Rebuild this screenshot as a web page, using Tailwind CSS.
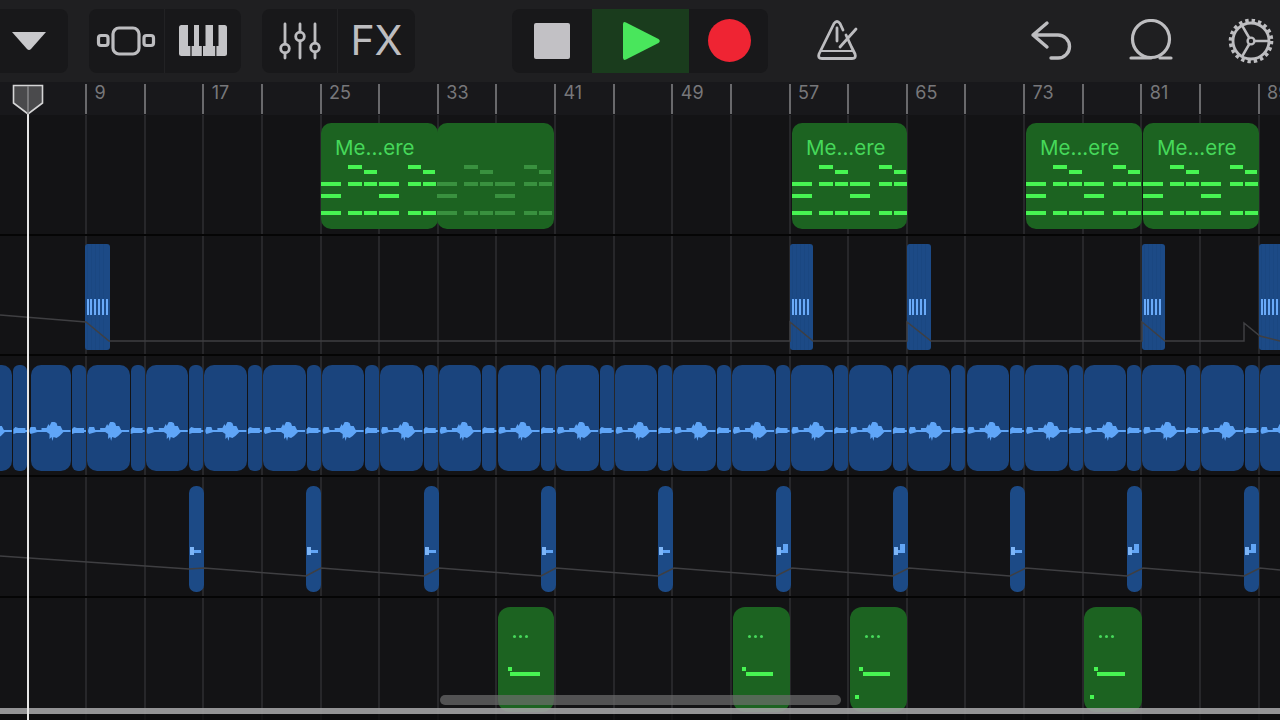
<!DOCTYPE html>
<html lang="en">
<head>
    <meta charset="UTF-8">
    <meta name="viewport" content="width=device-width, initial-scale=1.0">
    <title>Tracks</title>
    <script src="https://cdn.jsdelivr.net/npm/@tailwindcss/browser@4"></script>
</head>
<body class="w-[1280px] h-[720px] overflow-hidden bg-[#131315] font-['Inter',sans-serif]">
    <div class="relative flex flex-col h-[720px]">
        <!-- toolbar -->
        <div class="h-[82px] bg-[#1f1f21] flex items-center pb-[1px] shrink-0">
            <div class="w-[68px] h-[64px] bg-[#18181a] rounded-r-lg flex items-center justify-center pr-[10px] pl-0">
                <svg class="w-[36px] h-[20px]" viewBox="0 0 36 20"><path d="M1 1 H35 L20 18 Q18 20 16 18 Z" fill="#c9c9cc"/></svg>
            </div>
            <div class="ml-[21px] w-[152px] h-[64px] bg-[#18181a] rounded-lg flex">
                <div class="w-[76px] flex items-center justify-center border-r border-[#222224] pr-[2px]">
                    <svg class="w-[60px] h-[32px]" viewBox="0 0 60 32" fill="none" stroke="#bdbdc0" stroke-width="3.2">
                        <rect x="17" y="3" width="26" height="26" rx="6"/>
                        <rect x="2.5" y="10.5" width="9.5" height="10" rx="2.5"/>
                        <rect x="48" y="10.5" width="9.5" height="10" rx="2.5"/>
                    </svg>
                </div>
                <div class="flex-1 flex items-center justify-center">
                    <svg class="w-[50px] h-[33px]" viewBox="0 0 50 33">
                        <rect x="1" y="1" width="48" height="31" rx="2.5" fill="#c4c4c7"/>
                        <path fill="#18181a" d="M10 0 H16 V22 H13.6 V33 H12.4 V22 H10 Z M21 0 H27.5 V22 H25 V33 H23.8 V22 H21 Z M35 0 H40.5 V22 H38.4 V33 H37.2 V22 H35 Z"/>
                    </svg>
                </div>
            </div>
            <div class="ml-[21px] w-[153px] h-[64px] bg-[#18181a] rounded-lg flex">
                <div class="w-[76px] flex items-center justify-center border-r border-[#222224]">
                    <svg class="w-[44px] h-[38px]" viewBox="0 0 44 38" fill="none" stroke="#bdbdc0" stroke-width="2.8" stroke-linecap="round">
                        <path d="M7 2 V22 M7 31 V36 M22 2 V10 M22 19 V36 M37 2 V21 M37 30 V36"/>
                        <circle cx="7" cy="26.5" r="4.3"/>
                        <circle cx="22" cy="14.5" r="4.3"/>
                        <circle cx="37" cy="25.5" r="4.3"/>
                    </svg>
                </div>
                <div class="flex-1 flex items-center justify-center text-[#bdbdc0] text-[41px] font-normal leading-none">FX</div>
            </div>
            <div class="ml-[97px] w-[256px] h-[64px] bg-[#18181a] rounded-lg flex overflow-hidden">
                <div class="w-[80px] flex items-center justify-center">
                    <div class="w-[36px] h-[36px] bg-[#c2c1c5] rounded-[2px]"></div>
                </div>
                <div class="w-[97px] bg-[#1a3c1d] flex items-center justify-center">
                    <svg class="w-[40px] h-[40px] ml-[1px]" viewBox="0 0 40 40"><path d="M2 3.5 Q2 0 5 1.5 L37.5 18 Q40 20 37.5 22 L5 38.5 Q2 40 2 36.5 Z" fill="#49e65c"/></svg>
                </div>
                <div class="flex-1 flex items-center justify-center pl-[1px]">
                    <div class="w-[43px] h-[43px] bg-[#ef2433] rounded-full"></div>
                </div>
            </div>
            <svg class="ml-[47px] w-[44px] h-[44px]" viewBox="0 0 44 44" fill="none" stroke="#bdbdc0" stroke-width="2.8" stroke-linecap="round" stroke-linejoin="round">
                <path d="M31 16 L36.5 28 L40 35 Q41.5 39.5 37 39.5 H7 Q2.5 39.5 4 35 L19 4.5 Q22 0.5 25 4.5 L28 11"/>
                <path d="M22 9 V22"/>
                <path d="M25 28 L41 10"/>
                <path d="M6 32 H38" stroke-width="2"/>
            </svg>
            <svg class="ml-[171px] w-[44px] h-[42px]" viewBox="0 0 44 42" fill="none" stroke="#bdbdc0" stroke-width="3.4" stroke-linecap="round" stroke-linejoin="round">
                <path d="M17 3 L3 15 L17 27 M3 15 H28 A11.5 11.5 0 0 1 28 38 H21"/>
            </svg>
            <svg class="ml-[55px] w-[44px] h-[44px]" viewBox="0 0 44 44" fill="none" stroke="#bdbdc0" stroke-width="3.2" stroke-linecap="round">
                <circle cx="22" cy="20" r="18.5"/>
                <path d="M2 39 H22 M31 39 H42"/>
            </svg>
            <svg class="ml-[54px] w-[48px] h-[48px]" viewBox="0 0 48 48" fill="none" stroke="#bdbdc0">
                <circle cx="24" cy="24" r="18" stroke-width="2.8"/>
                <circle cx="24" cy="24" r="20.5" stroke-width="3.6" stroke-dasharray="3.4 3.04"/>
                <circle cx="24" cy="24" r="3.4" stroke-width="2.4"/>
                <path d="M27.4 24 H42 M22.3 27 L15 39.6 M22.3 21 L15 8.4" stroke-width="2.6"/>
            </svg>
        </div>

        <!-- ruler -->
        <div id="ruler" class="relative h-[33px] bg-[#18181b] shrink-0 overflow-hidden"></div>

        <!-- tracks -->
        <div id="tracks" class="relative flex-1 flex flex-col bg-[#131315]">
            <div id="grid" class="absolute inset-0"></div>
            <div id="t1" class="relative h-[121px] border-b-2 border-[#050505] shrink-0"></div>
            <div id="t2" class="relative h-[120px] border-b-2 border-[#050505] shrink-0"></div>
            <div id="t3" class="relative h-[121px] border-b-2 border-[#050505] shrink-0"></div>
            <div id="t4" class="relative h-[121px] border-b-2 border-[#050505] shrink-0"></div>
            <div id="t5" class="relative flex-1"></div>
        </div>

        <!-- overlays -->
        <div class="absolute left-[440px] top-[695px] w-[401px] h-[10px] rounded-full bg-[#6e6e6e]/70"></div>
        <div class="absolute left-0 right-0 top-[708px] h-[6px] bg-[#a2a2a3]/90"></div>
        <div class="absolute left-0 right-0 top-[714px] h-[6px] bg-[#0a0a0b]/70"></div>
        <div class="absolute left-[27px] top-[110px] bottom-0 w-[2px] bg-[#e6e6e6]"></div>
        <svg class="absolute left-[12px] top-[84px] w-[32px] h-[32px]" viewBox="0 0 32 32">
            <path d="M1.5 1.5 H30.5 V19 L16 30 L1.5 19 Z" fill="#4a4a4c" stroke="#d5d5d6" stroke-width="1.6"/>
            <path d="M16 2 V30" stroke="#8c8c8e" stroke-width="1.4"/>
        </svg>
    </div>

    <script>
        const ruler = document.getElementById('ruler');
        const grid = document.getElementById('grid');
        const step = 58.63;

        // bars: one tick every 4 bars, a number every 8
        for (let i = 0; i < 21; i++) {
            const x = 85 + i * step;
            const tick = document.createElement('div');
            tick.className = 'absolute top-[2px] h-[30px] w-[2px] bg-[#69696c]';
            tick.style.left = x + 'px';
            ruler.appendChild(tick);

            const line = document.createElement('div');
            line.className = 'absolute top-0 bottom-0 w-[2px] bg-[#27272a]';
            line.style.left = x + 'px';
            grid.appendChild(line);

            if (i % 2 == 0) {
                const label = document.createElement('div');
                label.className = 'absolute top-[0px] h-[20px] leading-[20px] text-[18px] text-[#77777a] mt-[1px]';
                label.style.left = (x + 9.5) + 'px';
                label.textContent = 9 + i * 4;
                ruler.appendChild(label);
            }
        }

        function region(track, x, y, w, h, cls) {
            const el = document.createElement('div');
            el.className = cls;
            el.style.left = x + 'px';
            el.style.top = y + 'px';
            el.style.width = w + 'px';
            el.style.height = h + 'px';
            document.getElementById(track).appendChild(el);
            return el;
        }

        function box(parent, x, y, w, h, cls) {
            const el = document.createElement('div');
            el.className = cls;
            el.style.left = x + 'px';
            el.style.top = y + 'px';
            el.style.width = w + 'px';
            el.style.height = h + 'px';
            parent.appendChild(el);
        }

        // track 1 - midi regions
        const melody = [
            [27, 42, 14], [87, 42, 13], [43, 47, 13], [102, 47, 12],
            [0, 59, 20], [27, 59, 14], [43, 59, 13], [58, 59, 20], [87, 59, 13], [102, 59, 13],
            [0, 71, 20], [58, 71, 20],
            [0, 88, 20], [27, 88, 14], [43, 88, 13], [58, 88, 20], [87, 88, 13], [102, 88, 13]
        ];
        [[321, 117, 0], [437, 117, 1], [792, 115, 0], [1026, 116, 0], [1143, 116, 0]].forEach(([x, w, muted]) => {
            const el = region('t1', x, 8, w, 106, 'absolute bg-[#1c6321] rounded-[10px] overflow-hidden');
            if (!muted) {
                const name = document.createElement('div');
                name.className = 'absolute left-[14px] top-[12px] mt-[1px] text-[20.5px] leading-[24px] text-[#46d85a] whitespace-nowrap';
                name.textContent = 'Me...ere';
                el.appendChild(name);
            }
            melody.forEach(([nx, ny, nw]) => {
                box(el, nx, ny, nw, 4, muted ? 'absolute bg-[#39913f]' : 'absolute bg-[#47f552]');
            });
        });

        // track 2 - short hits
        [[85, 25, 6], [790, 23, 5], [907, 24, 5], [1142, 23, 5], [1259, 24, 5]].forEach(([x, w, n]) => {
            const el = region('t2', x, 8, w, 106, 'absolute rounded-[3px] overflow-hidden bg-[#1c4a86]');
            for (let i = 0; i < 5; i++) box(el, 4 * i + 2, 0, 1, 106, 'absolute bg-[#1a4781]');
            for (let i = 0; i < n; i++) box(el, 1.5 + 3.8 * i, 55, 2.2, 16, 'absolute bg-[#6aaaf8]');
        });

        // track 3 - long audio loop
        const wave = 'M0 -1 L1 -4 H6 L7 -1 H12 V-3 H17 L19 -7 L20 -5 L22 -9 L25 -9 L27 -8 L28 -5 L31 -5 L33 -1 H41 V1 H34 L30 5 L27 7 L24 6 L23 10 L22 6 L20 8 V3 L17 1 H8 V1 L1 3 L0 1 Z';
        const small = 'M0 -2 L2 -4 L5 -3 H12 V-1 H14 V1 H12 V2 H3 L0 3 Z';
        const t3 = document.getElementById('t3');
        const big = [];
        for (let i = -1; i < 22; i++) {
            const x = 28.5 + i * step;
            // the first region starts a little late
            const left = i == 0 ? 31 : x;
            region('t3', left, 9, x + 42.5 - left, 106, 'absolute bg-[#1a447d] rounded-[10px]');
            region('t3', x + 43.5, 9, 14, 106, 'absolute bg-[#1a447d] rounded-[6px]');
            big.push(`<path transform="translate(${x + 1} 75)" d="${wave}"/><path transform="translate(${x + 43.5} 75)" d="${small}"/>`);
        }
        const overlay = document.createElementNS('http://www.w3.org/2000/svg', 'svg');
        overlay.setAttribute('class', 'absolute left-0 top-0 w-[1280px] h-[120px]');
        overlay.setAttribute('viewBox', '0 0 1280 120');
        overlay.setAttribute('fill', '#5fa5f7');
        overlay.innerHTML = big.join('');
        t3.appendChild(overlay);

        // track 4 - small blips
        [189, 306, 424, 541, 658, 776, 893, 1010, 1127, 1244].forEach((x, i) => {
            const el = region('t4', x, 9, 15, 106, 'absolute bg-[#1c4a86] rounded-[7px] overflow-hidden');
            box(el, 1, 61, 4, 8, 'absolute bg-[#7db5f7]');
            box(el, 5, 63.5, 7, 3, 'absolute bg-[#62a5f5]');
            if ([5, 6, 8, 9].includes(i)) box(el, 7, 58, 5, 9, 'absolute bg-[#62a5f5]');
        });

        // track 5 - green one-shots
        [[498, 56, 10, 11.5, 30, 0], [733, 57, 9, 13, 27, 0], [850, 57, 9, 13, 27, 5], [1084, 58, 10, 13, 28, 6]].forEach(([x, w, dot, lx, lw, low]) => {
            const el = region('t5', x, 9, w, 105, 'absolute bg-[#1c6321] rounded-[12px] overflow-hidden');
            for (let i = 0; i < 3; i++) box(el, 15 + 6 * i, 28, 3, 3, 'absolute rounded-full bg-[#46d85a]');
            box(el, dot, 60, 4, 4, 'absolute bg-[#47f552]');
            box(el, lx, 65, lw, 4, 'absolute bg-[#47f552]');
            if (low) box(el, low, 88, 4, 4, 'absolute bg-[#47f552]');
        });

        // automation lines on tracks 2 and 4
        function automation(track, points) {
            const svg = document.createElementNS('http://www.w3.org/2000/svg', 'svg');
            svg.setAttribute('class', 'absolute left-0 top-0 w-[1280px] h-[120px]');
            svg.setAttribute('viewBox', '0 0 1280 120');
            svg.innerHTML = `<polyline points="${points}" fill="none" stroke="#3f3f42" stroke-width="1.5"/>`;
            document.getElementById(track).appendChild(svg);
        }
        automation('t2', '0,79 86,86 109,105 790,105 790,86 813,105 907,105 907,86 931,105 1142,105 1142,86 1165,105 1244,105 1244,87 1260,100 1280,105');
        automation('t4', '0,79 189,92 204,91 306,99 321,91 424,99 439,91 541,99 556,91 658,99 674,91 776,99 792,91 893,99 909,91 1010,99 1026,91 1127,99 1143,91 1244,99 1260,91 1280,93');
    </script>
</body>
</html>
